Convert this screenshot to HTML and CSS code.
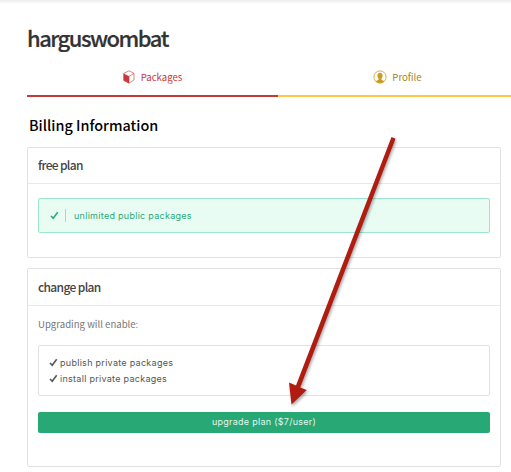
FILE: index.html
```html
<!DOCTYPE html>
<html lang="en">
<head>
<meta charset="utf-8">
<title>harguswombat</title>
<link rel="stylesheet" href="styles.css">
</head>
<body>
<div class="topbar"></div>
<h1 class="username">harguswombat</h1>
<nav class="tabs">
  <a class="tab tab-packages">
    <svg class="tab-icon" width="12" height="14" viewBox="0 0 12 14"><path d="M6 .8 11 3.4 11 10 6 13.2 .8 10.3 .8 3.4Z M6 6.2 11 3.4 M6 6.2V13" fill="none" stroke="currentColor" stroke-width=".6"/><path d="M.6 3.5 6 6.3V13.3L.6 10.4Z" fill="currentColor"/></svg>
    <span>Packages</span>
  </a>
  <a class="tab tab-profile">
    <svg class="tab-icon" width="14" height="14" viewBox="0 0 14 14"><circle cx="7" cy="7" r="6.1" fill="none" stroke="currentColor" stroke-width=".8"/><path d="M4.4 5.3C4.4 1.8 9.6 1.8 9.6 5.3 9.6 7 9 8 8.5 8.6V9.7L11.3 11.2C9 13.7 5 13.7 2.7 11.2L5.5 9.7V8.6C5 8 4.4 7 4.4 5.3Z" fill="currentColor"/></svg>
    <span class="profile-label">Profile</span>
  </a>
</nav>
<main class="billing">
  <h2 class="heading">Billing Information</h2>
  <section class="card card-free">
    <h3 class="card-title">free plan</h3>
    <div class="notice">
      <svg class="check" width="9" height="9" viewBox="0 0 9 9"><path d="M1 5 3.2 7.2 7.7 1.3" fill="none" stroke="currentColor" stroke-width="1.6"/></svg>
      <span class="notice-text">unlimited public packages</span>
    </div>
  </section>
  <section class="card card-change">
    <h3 class="card-title">change plan</h3>
    <p class="intro">Upgrading will enable:</p>
    <ul class="features">
      <li><svg class="check" width="9" height="9" viewBox="0 0 9 9"><path d="M1 5 3.2 7.2 7.7 1.3" fill="none" stroke="currentColor" stroke-width="1.6"/></svg><span>publish private packages</span></li>
      <li><svg class="check" width="9" height="9" viewBox="0 0 9 9"><path d="M1 5 3.2 7.2 7.7 1.3" fill="none" stroke="currentColor" stroke-width="1.6"/></svg><span>install private packages</span></li>
    </ul>
    <button class="upgrade">upgrade plan ($7/user)</button>
  </section>
</main>
<svg class="arrow" width="511" height="472" viewBox="0 0 511 472"><path d="M391.5 137 395.5 138.7 300.2 387.5 306.8 390 291.5 404.5 289 382.5 296 385.5Z" fill="#b01c10"/></svg>
</body>
</html>
```
FILE: styles.css
```css
* { box-sizing: border-box; }
body {
  margin: 0;
  height: 472px;
  overflow: hidden;
  background: #fff;
  font-family: "Noto Sans CJK JP", "Noto Sans", sans-serif;
  color: #333;
}
h1, h2, h3, p, ul { margin: 0; padding: 0; }
.topbar { height: 4px; background: linear-gradient(#eee, #f5f5f5 50%, #fff); }
.username {
  height: 56px;
  padding: 18px 0 0 27px;
  font-size: 22px;
  line-height: 30px;
  font-weight: 500;
  letter-spacing: -1.5px;
  -webkit-text-stroke: 0.2px;
}
.tabs {
  display: grid;
  grid-template-columns: 251px 239px;
  width: 490px;
  height: 37px;
  margin-left: 27px;
}
.tab {
  display: flex;
  justify-content: center;
  align-items: center;
  gap: 6px;
  height: 37px;
  padding-bottom: 1px;
  font-size: 9.6px;
  line-height: 14px;
  border-bottom: 2px solid;
}
.tab-profile { gap: 5px; }
.tab-packages { color: #cb3837; border-color: #c53a3b; }
.tab-profile { color: #cd9b1f; border-color: #fbc649; }
.profile-label { color: #a48226; }
.billing { width: 474px; margin-left: 27px; }
.heading {
  height: 50px;
  padding: 17px 0 0 2px;
  font-size: 14.4px;
  line-height: 22px;
  font-weight: 500;
  color: #000;
}
.card {
  border: 1px solid #e2e2e2;
  border-radius: 2px;
}
.card-free { height: 111px; }
.card-change { height: 199px; margin-top: 10px; }
.card-title {
  height: 36px;
  padding-left: 10px;
  border-bottom: 1px solid #e8e8e8;
  font-size: 12px;
  line-height: 34px;
  font-weight: 500;
  letter-spacing: -0.65px;
  color: #444;
}
.card-change .card-title { height: 37px; line-height: 35px; }
.notice {
  display: flex;
  align-items: center;
  height: 35px;
  margin: 14px 10px 0;
  padding-left: 11px;
  border: 1px solid #9ce6cb;
  border-radius: 2px;
  background: #e8fcf4;
  color: #29ab78;
}
.notice-text {
  margin-left: 6px;
  padding-left: 8px;
  border-left: 1px solid #9ce0c8;
  line-height: 13px;
}
.notice-text, .features, .upgrade {
  font-family: Inter, "Liberation Sans", sans-serif;
  font-size: 9px;
  letter-spacing: 0.28px;
}
.intro {
  padding: 10px 0 0 10px;
  font-size: 9.6px;
  line-height: 16px;
  color: #777;
}
.features {
  height: 51px;
  margin: 13px 10px 0;
  padding: 8px 10px;
  border: 1px solid #e2e2e2;
  border-radius: 2px;
  list-style: none;
  color: #555;
}
.features li { display: flex; align-items: center; gap: 2px; height: 16px; }
.check { flex: none; }
.upgrade {
  display: block;
  width: 452px;
  height: 21px;
  margin: 16px 10px 0;
  padding: 0 0 2px;
  border: 0;
  border-radius: 2px;
  background: #27a874;
  color: #e5f6ef;
}
.arrow {
  position: absolute;
  left: 0;
  top: 0;
  pointer-events: none;
  filter: drop-shadow(1px 2px 1.5px rgba(0, 0, 0, 0.35));
}
```
